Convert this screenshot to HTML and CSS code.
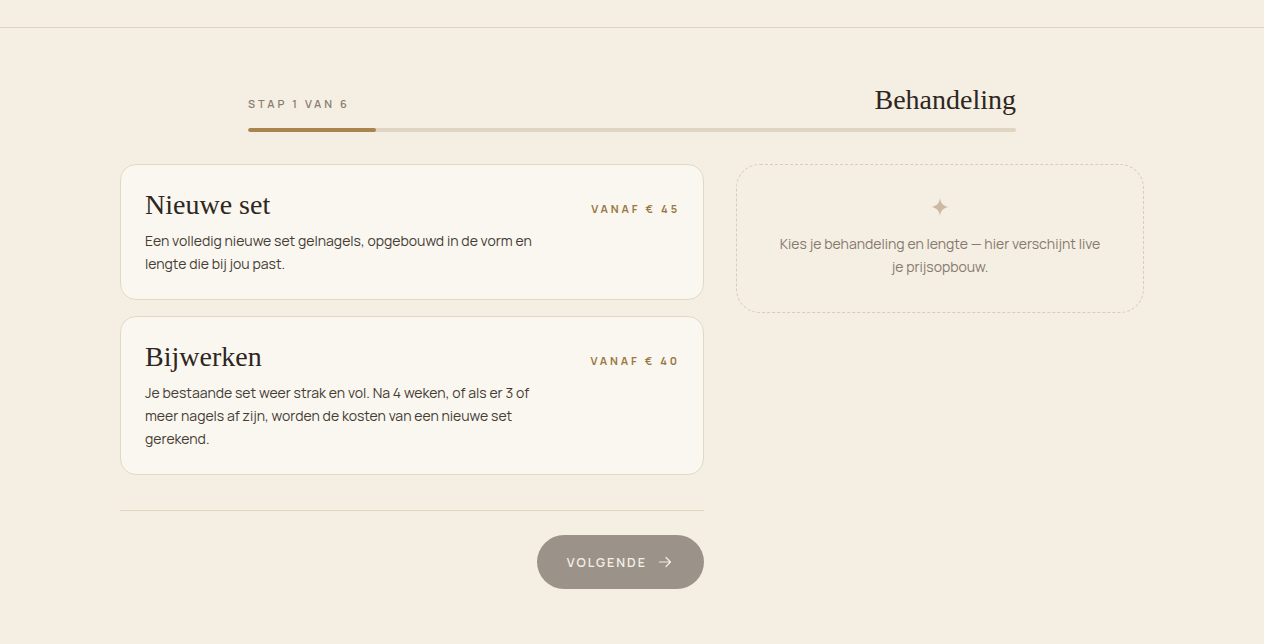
FILE: index.html
```html
<!DOCTYPE html>
<html lang="nl">
<head>
  <meta charset="UTF-8" />
  <meta name="viewport" content="width=device-width, initial-scale=1.0"/>
  <title>Afspraak maken</title>
  <link rel="stylesheet" href="styles.css">
</head>
<body>

  <!-- Top bar -->
  <header class="topbar"></header>

  <main class="booking">

    <!-- Progress -->
    <div class="progress">
      <div class="progress-head">
        <span class="step-label">Stap 1 van 6</span>
        <h1 class="step-title">Behandeling</h1>
      </div>
      <div class="progress-track">
        <div class="progress-fill" style="width: 16.6667%"></div>
      </div>
    </div>

    <div class="layout">
      <!-- Options -->
      <section class="options">
        <div class="option-card">
          <div class="option-info">
            <h2 class="option-title">Nieuwe set</h2>
            <p class="option-desc">Een volledig nieuwe set gelnagels, opgebouwd in de vorm en lengte die bij jou past.</p>
          </div>
          <span class="option-price">Vanaf € 45</span>
        </div>

        <div class="option-card">
          <div class="option-info">
            <h2 class="option-title">Bijwerken</h2>
            <p class="option-desc">Je bestaande set weer strak en vol. Na 4 weken, of als er 3 of meer nagels af zijn, worden de kosten van een nieuwe set gerekend.</p>
          </div>
          <span class="option-price">Vanaf € 40</span>
        </div>

        <div class="actions">
          <button class="btn-next" disabled>
            Volgende
            <svg width="14" height="14" viewBox="0 0 14 14" fill="none" stroke="currentColor" stroke-width="1.2" stroke-linecap="round" stroke-linejoin="round">
              <path d="M1.5 7h11M8 2.5 12.5 7 8 11.5"/>
            </svg>
          </button>
        </div>
      </section>

      <!-- Summary -->
      <aside class="summary">
        <svg class="sparkle" width="18" height="18" viewBox="0 0 18 18">
          <path d="M9 0C9.6 5.4 12.6 8.4 18 9 12.6 9.6 9.6 12.6 9 18 8.4 12.6 5.4 9.6 0 9 5.4 8.4 8.4 5.4 9 0Z" fill="#cdb9a0"/>
        </svg>
        <p>Kies je behandeling en lengte — hier verschijnt live je prijsopbouw.</p>
      </aside>
    </div>

  </main>

</body>
</html>
```

FILE: styles.css
```css
/* General */
body {
  margin: 0;
  background: #f5eee3;
  font-family: Manrope, Inter, "Noto Sans", sans-serif;
  color: #3b322b;
}
h1, h2, p {
  margin: 0;
}
.topbar {
  height: 27px;
  border-bottom: 1px solid #ddd3c3;
}

.booking {
  width: 1024px;
  margin: 0 auto;
  padding-top: 58px;
}

/* Progress */
.progress {
  width: 768px;
  margin: 0 auto 32px;
}
.progress-head {
  display: flex;
  justify-content: space-between;
  align-items: flex-end;
  margin-bottom: 14px;
}
.step-label {
  font-size: 11px;
  font-weight: 600;
  letter-spacing: 2.9px;
  text-transform: uppercase;
  color: #8a7d70;
  margin-bottom: 3px;
}
.step-title {
  font-family: "Liberation Serif", "DejaVu Serif", serif;
  font-weight: 400;
  font-size: 28px;
  line-height: 28px;
  color: #2e2620;
}
.progress-track {
  height: 4px;
  border-radius: 2px;
  background: #e0d5c3;
  overflow: hidden;
}
.progress-fill {
  height: 100%;
  border-radius: 2px;
  background: #a9854e;
}

/* Layout */
.layout {
  display: flex;
  gap: 32px;
  align-items: flex-start;
}
.options {
  width: 584px;
  display: flex;
  flex-direction: column;
  gap: 16px;
}

/* Option cards */
.option-card {
  display: flex;
  justify-content: space-between;
  align-items: flex-start;
  background: #faf7f1;
  border: 1px solid #e3d8c6;
  border-radius: 16px;
  padding: 24px;
}
.option-title {
  font-family: "Liberation Serif", "DejaVu Serif", serif;
  font-weight: 400;
  font-size: 28px;
  line-height: 32px;
  color: #2e2620;
  margin-bottom: 8px;
}
.option-desc {
  max-width: 400px;
  font-size: 14px;
  line-height: 23px;
  color: #463c34;
}
.option-price {
  font-size: 11px;
  font-weight: 700;
  letter-spacing: 2.9px;
  text-transform: uppercase;
  color: #9a7843;
  margin-top: 12px;
  margin-right: -1px;
}

/* Actions */
.actions {
  display: flex;
  justify-content: flex-end;
  border-top: 1px solid #e3d6c0;
  margin-top: 19px;
  padding-top: 24px;
}
.btn-next {
  display: flex;
  align-items: center;
  gap: 11px;
  height: 54px;
  padding: 0 32px 0 30px;
  border: none;
  border-radius: 27px;
  background: #9b9389;
  color: #f4eee4;
  font-family: inherit;
  font-size: 12.5px;
  font-weight: 600;
  letter-spacing: 2px;
  text-transform: uppercase;
  cursor: not-allowed;
}

/* Summary */
.summary {
  width: 408px;
  box-sizing: border-box;
  border: 1px dashed #d9ccb8;
  border-radius: 24px;
  padding: 31px 36px 34px;
  text-align: center;
}
.sparkle {
  display: block;
  margin: 2px auto 16px;
}
.summary p {
  font-size: 14px;
  line-height: 23px;
  color: #857a6e;
}
```
